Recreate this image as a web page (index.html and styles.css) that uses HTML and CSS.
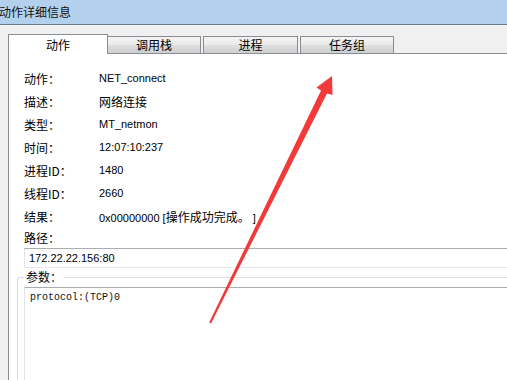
FILE: index.html
```
<!DOCTYPE html>
<html lang="zh-CN">
<head>
<meta charset="utf-8">
<title>动作详细信息</title>
<link rel="stylesheet" href="styles.css">
</head>
<body>
<div class="window">
  <div class="titlebar">动作详细信息</div>
  <div class="client">
    <div class="tabs">
      <div class="tab active">动作</div>
      <div class="tab t2">调用栈</div>
      <div class="tab t3">进程</div>
      <div class="tab t4">任务组</div>
    </div>
    <div class="panel">
      <div class="rows">
        <div class="row"><span class="label">动作：</span><span class="val">NET_connect</span></div>
        <div class="row"><span class="label">描述：</span><span class="val cjk">网络连接</span></div>
        <div class="row"><span class="label">类型：</span><span class="val">MT_netmon</span></div>
        <div class="row"><span class="label">时间：</span><span class="val">12:07:10:237</span></div>
        <div class="row"><span class="label">进程ID：</span><span class="val">1480</span></div>
        <div class="row"><span class="label">线程ID：</span><span class="val">2660</span></div>
        <div class="row"><span class="label">结果：</span><span class="val">0x00000000 [<span class="cjk">操作成功完成。</span> ]</span></div>
      </div>
      <div class="path-label">路径：</div>
      <div class="path-box">172.22.22.156:80</div>
      <fieldset class="params">
        <legend>参数：</legend>
        <div class="param-box">protocol:(TCP)0</div>
      </fieldset>
    </div>
  </div>
  <svg class="arrow" width="507" height="380" viewBox="0 0 507 380">
    <polygon points="332,76 332.5,95 327,93.5 211,323.5 209.2,322.6 321,90.5 316.5,87.5" fill="#f23a3a"/>
  </svg>
</div>
</body>
</html>
```

FILE: styles.css
```
html, body {
  margin: 0;
  padding: 0;
  width: 507px;
  height: 380px;
  overflow: hidden;
  background: #f0f0f0;
}

.window {
  width: 507px;
  height: 380px;
  display: flex;
  flex-direction: column;
  font-family: "Noto Sans CJK SC", "Liberation Sans", sans-serif;
  font-size: 12px;
  color: #000;
}

.titlebar {
  height: 24px;
  line-height: 24px;
  background: #b3d1ed;
  border-bottom: 1px solid #6e7b88;
  text-indent: -1px;
  font-size: 12px;
  color: #111;
}

.client {
  flex: 1;
  display: flex;
  flex-direction: column;
  padding: 9px 0 0 8px;
  min-height: 0;
}

.tabs {
  display: flex;
  align-items: flex-end;
  height: 19px;
}

.tab {
  box-sizing: border-box;
  height: 17px;
  border: 1px solid #898c95;
  border-bottom: none;
  background: linear-gradient(#f4f4f4 0%, #ebebeb 45%, #dddddd 55%, #cfcfcf 100%);
  text-align: center;
  line-height: 16px;
  font-size: 12px;
}

.tab.active {
  width: 100px;
  height: 20px;
  margin-bottom: -1px;
  background: #fff;
  line-height: 20px;
  position: relative;
  z-index: 1;
}

.tab.t2 { width: 94px; margin-left: -1px; }
.tab.t3 { width: 95px; margin-left: 2px; }
.tab.t4 { width: 94px; margin-left: 2px; }

.panel {
  flex: 1;
  background: #fff;
  border-top: 1px solid #898c95;
  border-left: 1px solid #898c95;
  padding: 13px 0 0 15px;
  display: flex;
  flex-direction: column;
  min-height: 0;
  min-width: 0;
}

.row {
  display: flex;
  height: 23px;
  line-height: 23px;
}

.label {
  width: 75px;
  flex: none;
}

.val {
  font-family: "Liberation Sans", sans-serif;
  font-size: 11px;
}

.val .cjk, .val.cjk {
  font-family: "Noto Sans CJK SC", sans-serif;
  font-size: 12px;
}

.path-label {
  height: 20px;
  line-height: 20px;
}

.path-box {
  box-sizing: border-box;
  height: 20px;
  border: 1px solid #e2e3ea;
  border-top-color: #abadb3;
  border-bottom-color: #e3e9ef;
  border-right: none;
  padding-left: 4px;
  line-height: 18px;
  font-family: "Liberation Sans", sans-serif;
  font-size: 11px;
}

.params {
  flex: 1;
  margin: 2px 0 0 -7px;
  padding: 3px 0 0 6px;
  border: 1px solid #d5dfe5;
  border-right: none;
  border-bottom: none;
  border-radius: 3px 0 0 0;
  display: flex;
  flex-direction: column;
  min-width: 0;
  min-height: 0;
}

.params legend {
  padding: 0 2px;
  line-height: 14px;
  font-size: 12px;
}

.param-box {
  flex: 1;
  border: 1px solid #e2e3ea;
  border-top-color: #abadb3;
  border-right: none;
  border-bottom: none;
  padding: 3px 0 0 5px;
  font-family: "Liberation Mono", monospace;
  font-size: 10px;
  line-height: 13px;
  color: #111;
}

.arrow {
  position: absolute;
  left: 0;
  top: 0;
  pointer-events: none;
}
```
